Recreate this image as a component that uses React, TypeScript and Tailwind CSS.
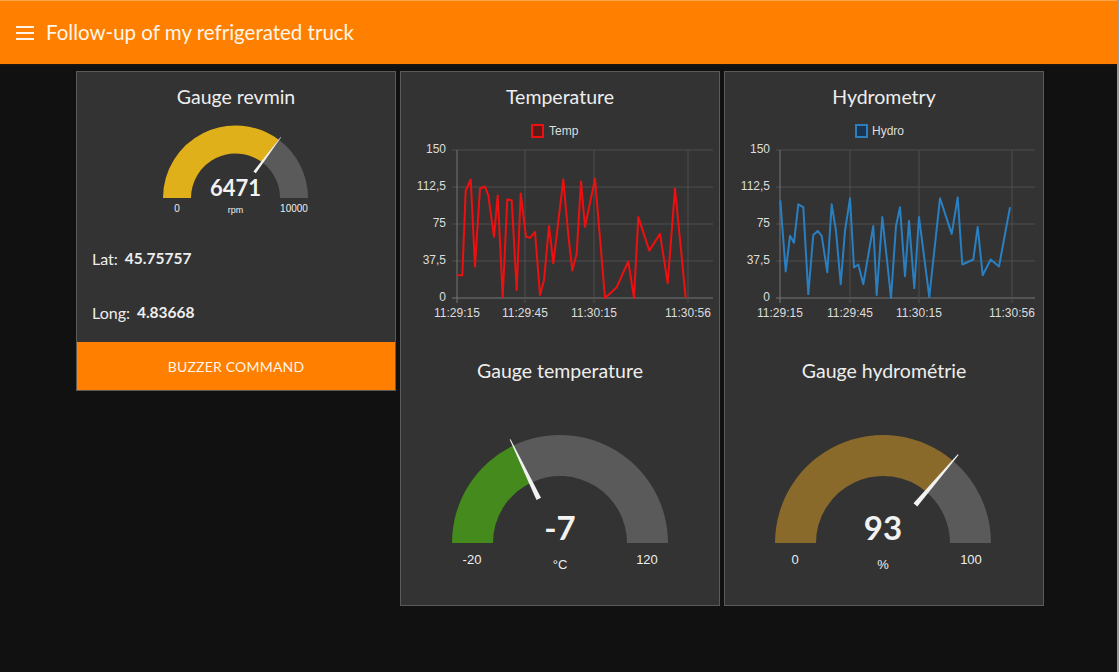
import React from "react";

const ui = { fontFamily: "Lato, 'Open Sans', sans-serif" };
const arial = "'Liberation Sans', Arial, sans-serif";

const tempData: [number, number][] = [
  [456.7, 23], [462.3, 23], [465.7, 109], [470.7, 120], [475, 32], [480, 111], [485, 113],
  [488.3, 104], [494, 62], [497.7, 104], [502.7, 1], [507.3, 100], [511.7, 99], [516.7, 8],
  [520.7, 106], [526, 62], [530, 61], [535, 67], [540, 3], [544, 18], [549, 73], [553.3, 35],
  [563.3, 120], [568.3, 64], [572.3, 28], [576.7, 45], [581, 118], [585, 72], [595, 121],
  [605, 0], [611.7, 6], [616.7, 11], [628.3, 37], [634, 0], [638.3, 82], [649.3, 48],
  [660, 65], [667.7, 15], [675, 111], [685.7, 0],
];

const hydroData: [number, number][] = [
  [780.3, 99], [785.7, 27], [790, 63], [794, 56], [798.3, 95], [803.3, 92], [808.3, 4],
  [813.3, 64], [817.7, 68], [821.7, 63], [827.3, 26], [831.7, 95], [836, 68], [840.7, 14],
  [845, 68], [850, 101], [854, 31], [858.3, 34], [863.3, 14], [873.3, 73], [876.7, 3],
  [882.3, 82], [886.7, 41], [891, 0], [896, 73], [900, 92], [905, 22], [909, 78],
  [914.3, 10], [919, 82], [929.3, 1], [940, 101], [951.7, 65], [957.7, 102], [962.3, 34],
  [973.3, 39], [977.7, 72], [982.7, 23], [990.7, 39], [999, 32], [1010, 92],
];

const yFor = (v: number) => 176 - (v * 148) / 150;

function Chart({
  data, offset, color, fill, legend, xs, right, labelX,
}: {
  data: [number, number][]; offset: number; color: string; fill: string; legend: string;
  xs: number[]; right: number; labelX: number;
}) {
  const ticks = ["0", "37,5", "75", "112,5", "150"];
  const times = ["11:29:15", "11:29:45", "11:30:15", "11:30:56"];
  const pts = data.map(([x, v]) => `${(x - offset).toFixed(1)},${yFor(v).toFixed(1)}`).join(" ");
  return (
    <svg width={318} height={224} className="block" style={{ fontFamily: arial }}>
      <rect x={131} y={3} width={11} height={12} fill={fill} stroke={color} strokeWidth={2} />
      <text x={labelX} y={13} fontSize={12} fill="#ddd">{legend}</text>
      {ticks.map((t, i) => (
        <g key={t}>
          <line x1={51} x2={right} y1={176 - i * 37} y2={176 - i * 37} stroke={i === 0 ? "#777" : "#4e4e4e"} strokeWidth={1} />
          <text x={45} y={176 - i * 37 + 3} fontSize={12} fill="#ddd" textAnchor="end">{t}</text>
        </g>
      ))}
      {xs.map((x, i) => (
        <g key={x}>
          <line x1={x} x2={x} y1={28} y2={181} stroke={i === 0 ? "#777" : "#4e4e4e"} strokeWidth={1} />
          <text x={x} y={195} fontSize={12} fill="#ddd" textAnchor="middle">{times[i]}</text>
        </g>
      ))}
      <polyline points={pts} fill="none" stroke={color} strokeWidth={2} strokeLinejoin="round" />
    </svg>
  );
}

const pt = (cx: number, cy: number, r: number, a: number) => {
  const rad = (a * Math.PI) / 180;
  return [cx + r * Math.cos(rad), cy - r * Math.sin(rad)];
};

function band(cx: number, cy: number, R: number, r: number, a1: number, a2: number) {
  const [x1, y1] = pt(cx, cy, R, a1);
  const [x2, y2] = pt(cx, cy, R, a2);
  const [x3, y3] = pt(cx, cy, r, a2);
  const [x4, y4] = pt(cx, cy, r, a1);
  return `M${x1},${y1} A${R},${R} 0 0 1 ${x2},${y2} L${x3},${y3} A${r},${r} 0 0 0 ${x4},${y4} Z`;
}

function needle(cx: number, cy: number, a: number, ri: number, ro: number, w: number) {
  const rad = (a * Math.PI) / 180;
  const px = Math.sin(rad) * (w / 2);
  const py = Math.cos(rad) * (w / 2);
  const [ix, iy] = pt(cx, cy, ri, a);
  const [ox, oy] = pt(cx, cy, ro, a);
  return `${ix + px},${iy + py} ${ox + px * 0.2},${oy + py * 0.2} ${ox - px * 0.2},${oy - py * 0.2} ${ix - px},${iy - py}`;
}

type GaugeProps = {
  w: number; h: number; cx: number; cy: number; R: number; r: number; angle: number; color: string;
  ni: number; no: number; nw: number; value: string; valueY: number; valueSize: number;
  min: string; max: string; minX: number; maxX: number; labelY: number; labelSize: number;
  unit: string; unitY: number; unitSize: number;
};

function Gauge(p: GaugeProps) {
  return (
    <svg width={p.w} height={p.h} className="block">
      <path d={band(p.cx, p.cy, p.R, p.r, 180, p.angle)} fill={p.color} />
      <path d={band(p.cx, p.cy, p.R, p.r, p.angle, 0)} fill="#5a5a5a" />
      <polygon points={needle(p.cx, p.cy, p.angle, p.ni, p.no, p.nw)} fill="#f2f2f2" />
      <text x={p.cx} y={p.valueY} fontSize={p.valueSize} fontWeight={700} fill="#f2f2f2" textAnchor="middle" dominantBaseline="middle" style={ui}>{p.value}</text>
      <text x={p.minX} y={p.labelY} fontSize={p.labelSize} fill="#eee" textAnchor="middle" dominantBaseline="middle" style={{ fontFamily: arial }}>{p.min}</text>
      <text x={p.maxX} y={p.labelY} fontSize={p.labelSize} fill="#eee" textAnchor="middle" dominantBaseline="middle" style={{ fontFamily: arial }}>{p.max}</text>
      <text x={p.cx} y={p.unitY} fontSize={p.unitSize} fill="#eee" textAnchor="middle" dominantBaseline="middle" style={{ fontFamily: arial }}>{p.unit}</text>
    </svg>
  );
}

const Title = ({ children }: { children: React.ReactNode }) => (
  <div className="h-[50px] flex items-center justify-center text-[19.5px] text-[#eee]">{children}</div>
);

export default function App() {
  return (
    <div className="w-[1119px] h-[672px] bg-[#111] overflow-hidden border-r-2 border-[#9a9a9a]" style={ui}>
      <header className="h-[64px] bg-[#ff7f00] flex items-center border-t border-[#ffa64d]">
        <div className="ml-[16px] w-[18px] flex flex-col gap-[4px]">
          <span className="h-[2px] bg-[#fff4e6]" />
          <span className="h-[2px] bg-[#fff4e6]" />
          <span className="h-[2px] bg-[#fff4e6]" />
        </div>
        <h1 className="ml-[12px] text-[20.5px] text-[#fff6ea]">Follow-up of my refrigerated truck</h1>
      </header>
      <div className="h-[2px] bg-[#1c1410]" />
      <main className="flex items-start gap-[4px] pl-[76px] pt-[5px]">
        <section className="w-[320px] h-[320px] bg-[#333] border border-[#5a5a5a] flex flex-col">
          <Title>Gauge revmin</Title>
          <Gauge w={318} h={110} cx={158.5} cy={76} R={72.5} r={44.5} angle={53.3} color="#e0b01a"
            ni={32} no={76} nw={3} value="6471" valueY={68} valueSize={22}
            min="0" max="10000" minX={100} maxX={217} labelY={87} labelSize={10}
            unit="rpm" unitY={89} unitSize={9} />
          <div className="h-[54px] flex items-center pl-[15px] text-[16px] text-[#eee]">
            Lat:<b className="ml-[7px] font-bold text-[15.5px]">45.75757</b>
          </div>
          <div className="h-[54px] flex items-center pl-[15px] text-[16px] text-[#eee]">
            Long:<b className="ml-[7px] font-bold text-[15.5px]">4.83668</b>
          </div>
          <button className="mt-[2px] h-[48px] bg-[#ff7f00] text-[14px] text-[#fff4e6] tracking-[0.2px]">
            BUZZER COMMAND
          </button>
        </section>
        <section className="w-[320px] h-[535px] bg-[#333] border border-[#5a5a5a]">
          <Title>Temperature</Title>
          <Chart data={tempData} offset={401} color="#ee1010" fill="#5a1a1a" legend="Temp"
            xs={[56, 124, 193, 287]} right={312} labelX={148} />
          <Title>Gauge temperature</Title>
          <Gauge w={318} h={184} cx={159} cy={147} R={108} r={67} angle={115.7} color="#448a1c"
            ni={49} no={115} nw={5} value="-7" valueY={136} valueSize={33}
            min="-20" max="120" minX={71} maxX={246} labelY={165} labelSize={13}
            unit="°C" unitY={170} unitSize={13} />
        </section>
        <section className="w-[320px] h-[535px] bg-[#333] border border-[#5a5a5a]">
          <Title>Hydrometry</Title>
          <Chart data={hydroData} offset={725} color="#2a7fc0" fill="#1b3550" legend="Hydro"
            xs={[55, 125, 194, 287]} right={310} labelX={147} />
          <Title>Gauge hydrométrie</Title>
          <Gauge w={318} h={184} cx={158} cy={147} R={108} r={67} angle={49.6} color="#8a6a2a"
            ni={50} no={116} nw={5} value="93" valueY={136} valueSize={33}
            min="0" max="100" minX={70} maxX={246} labelY={165} labelSize={13}
            unit="%" unitY={170} unitSize={13} />
        </section>
      </main>
    </div>
  );
}
